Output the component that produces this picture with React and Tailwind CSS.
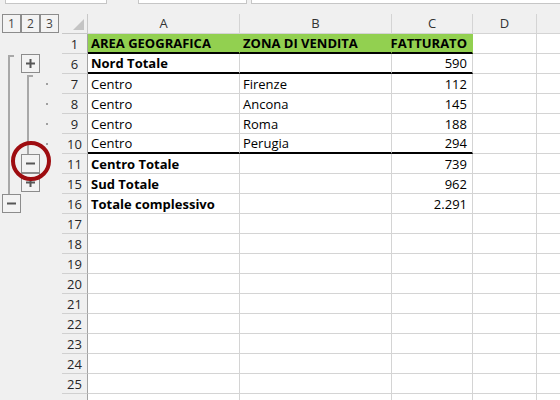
import React from "react";

const FONT = "font-['Open_Sans','Noto_Sans',sans-serif]";

function Glyph({ plus }) {
  return (
    <svg width="9" height="9" viewBox="0 0 9 9">
      <rect x="0" y="3.5" width="9" height="2" fill="#575757" />
      {plus && <rect x="3.5" y="0" width="2" height="9" fill="#575757" />}
    </svg>
  );
}

function OBtn({ plus, className = "" }) {
  return (
    <div
      className={`w-[19px] h-[19px] border border-[#8c8c8c] bg-[#f3f3f3] flex items-center justify-center ${className}`}
    >
      <Glyph plus={plus} />
    </div>
  );
}

const LINE = "bg-[#a8a8a8]";

function Outline({ n }) {
  let l1 = null;
  let l2 = null;
  let l3 = null;
  if (n === 6)
    l1 = <div className="ml-[8px] mt-[1px] w-[6px] h-[19px] border-l-2 border-t-2 border-[#a8a8a8]" />;
  else if ([7, 8, 9, 10, 11, 15].includes(n))
    l1 = <div className={`ml-[8px] w-[2px] h-[20px] ${LINE}`} />;
  else if (n === 16) l1 = <OBtn className="ml-[2px]" />;

  if (n === 6) l2 = <OBtn plus className="ml-[1px]" />;
  else if (n === 7)
    l2 = <div className="ml-[7px] mt-[1px] w-[6px] h-[19px] border-l-2 border-t-2 border-[#a8a8a8]" />;
  else if ([8, 9, 10].includes(n)) l2 = <div className={`ml-[7px] w-[2px] h-[20px] ${LINE}`} />;
  else if (n === 11) l2 = <OBtn className="ml-[1px]" />;
  else if (n === 15) l2 = <OBtn plus className="ml-[1px] -mt-[1px]" />;

  if ([7, 8, 9, 10].includes(n)) l3 = <div className="ml-[6px] mt-[9px] w-[2px] h-[2px] bg-[#a0a0a0]" />;

  return (
    <div className="w-[62px] h-[20px] flex shrink-0">
      <div className="w-[20px] h-[20px]">{l1}</div>
      <div className="w-[20px] h-[20px]">{l2}</div>
      <div className="w-[22px] h-[20px]">{l3}</div>
    </div>
  );
}

const rows = [
  { n: 1, a: "AREA GEOGRAFICA", b: "ZONA DI VENDITA", c: "FATTURATO", head: true },
  { n: 6, a: "Nord Totale", c: "590", bold: true, black: true },
  { n: 7, a: "Centro", b: "Firenze", c: "112" },
  { n: 8, a: "Centro", b: "Ancona", c: "145" },
  { n: 9, a: "Centro", b: "Roma", c: "188" },
  { n: 10, a: "Centro", b: "Perugia", c: "294", black: true },
  { n: 11, a: "Centro Totale", c: "739", bold: true },
  { n: 15, a: "Sud Totale", c: "962", bold: true },
  { n: 16, a: "Totale complessivo", c: "2.291", bold: true },
  ...[17, 18, 19, 20, 21, 22, 23, 24, 25].map((n) => ({ n })),
  { n: 26, hideNum: true },
];

function Row({ r }) {
  const head = r.head;
  const bottom = head || r.black ? "border-b-2 border-b-black" : "border-b border-b-[#d4d4d4]";
  const right = head ? "border-r border-r-[#92d050]" : "border-r border-r-[#d4d4d4]";
  const bg = head ? "bg-[#92d050]" : "bg-white";
  const base = `h-[20px] shrink-0 flex items-center pt-[2px] text-[13px] text-black ${bottom} ${right} ${bg}`;
  const boldA = head || r.bold ? "font-bold" : "font-normal";
  const boldBC = head ? "font-bold" : "font-normal";
  return (
    <div className="flex h-[20px]">
      <Outline n={r.n} />
      <div className="w-[26px] h-[20px] shrink-0 pt-[2px] border-r border-r-[#a3a3a3] border-b border-b-[#d0d0d0] flex items-center justify-center text-[13px] text-[#262626]">
        {r.hideNum ? "" : r.n}
      </div>
      <div className={`w-[152px] pl-[3px] ${base} ${boldA}`}>{r.a}</div>
      <div className={`w-[152px] pl-[3px] ${base} ${boldBC}`}>{r.b}</div>
      <div className={`w-[81px] pr-[5px] justify-end ${base} ${boldBC}`}>{r.c}</div>
      <div className="w-[64px] h-[20px] shrink-0 bg-white border-r border-b border-[#d4d4d4]" />
      <div className="flex-1 h-[20px] bg-white border-b border-[#d4d4d4]" />
    </div>
  );
}

function LevelBtn({ t }) {
  return (
    <div className="w-[19px] h-[19px] border border-[#8c8c8c] bg-[#f3f3f3] flex items-center justify-center text-[12px] text-[#444]">
      {t}
    </div>
  );
}

export default function App() {
  const colHead = "h-[20px] shrink-0 flex items-center justify-center text-[13px] text-[#333] border-r border-b border-[#d4d4d4]";
  return (
    <div className={`relative w-[560px] h-[400px] overflow-hidden bg-[#f0f0f0] ${FONT}`}>
      {/* formula bar bottoms */}
      <div className="h-[14px] flex items-start">
        <div className="ml-[5px] w-[102px] h-[4px] bg-white border-x border-b border-[#c6c6c6]" />
        <div className="ml-[31px] w-[109px] h-[4px] bg-white border-x border-b border-[#c6c6c6]" />
        <div className="ml-[4px] flex-1 h-[4px] bg-white border-l border-b border-[#c6c6c6]" />
      </div>

      {/* column header row */}
      <div className="flex h-[20px]">
        <div className="w-[62px] h-[20px] shrink-0 flex pl-[2px]">
          <LevelBtn t="1" />
          <LevelBtn t="2" />
          <LevelBtn t="3" />
        </div>
        <div className="w-[26px] h-[20px] shrink-0 border-r border-b border-[#c8c8c8] flex items-end justify-end pr-[3px] pb-[3px]">
          <svg width="11" height="11" viewBox="0 0 11 11">
            <polygon points="0,11 11,11 11,0" fill="#c4c4c4" />
          </svg>
        </div>
        <div className={`w-[152px] ${colHead}`}>A</div>
        <div className={`w-[152px] ${colHead}`}>B</div>
        <div className={`w-[81px] ${colHead}`}>C</div>
        <div className={`w-[64px] ${colHead}`}>D</div>
        <div className="flex-1 h-[20px] border-b border-[#d4d4d4]" />
      </div>

      {rows.map((r) => (
        <Row key={r.n} r={r} />
      ))}

      {/* red highlight circle */}
      <div className="absolute left-[11px] top-[141px] w-[40px] h-[40px] rounded-full border-4 border-[#9e0c10]" />
    </div>
  );
}
